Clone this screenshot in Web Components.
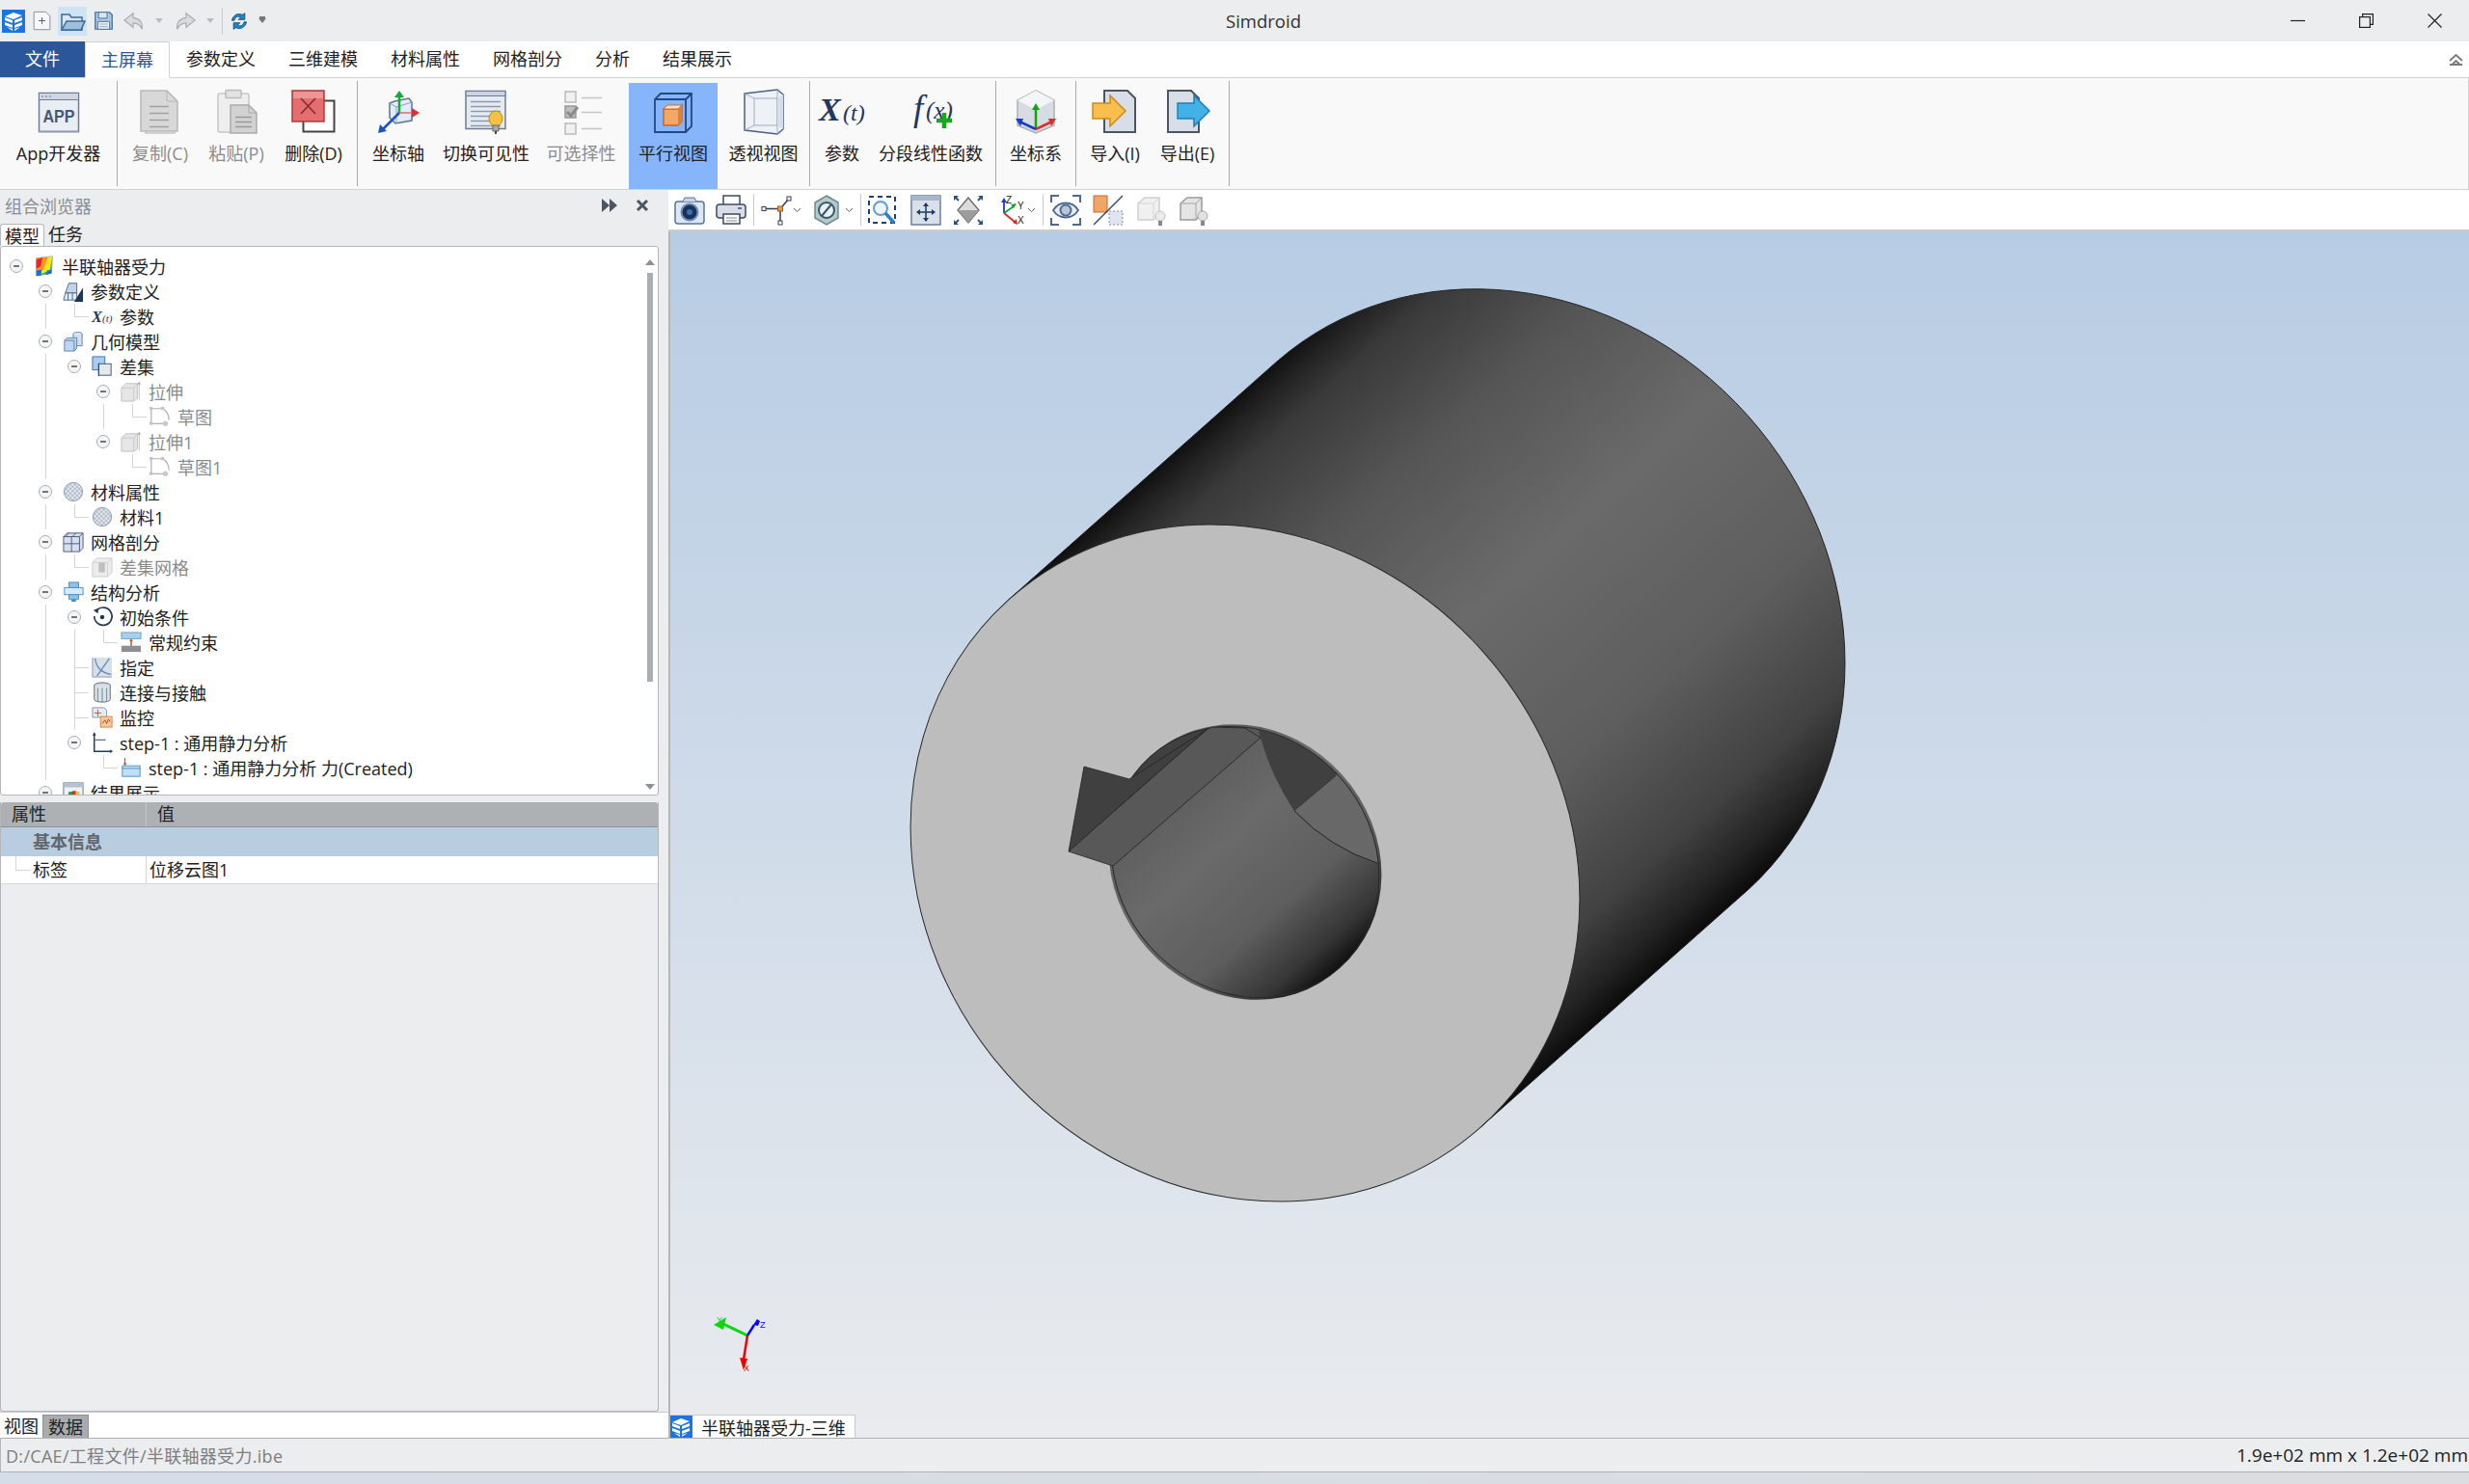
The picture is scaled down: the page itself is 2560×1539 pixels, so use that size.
<!DOCTYPE html>
<html lang="zh">
<head>
<meta charset="utf-8">
<title>Simdroid</title>
<style>
html, body { margin: 0; height: 100%; overflow: hidden; background: #ecedef; }
body { font: 18px "Open Sans", "Noto Sans CJK SC", sans-serif; color: #222; }
</style>
</head>
<body>
<sim-app></sim-app>

<script>
const doc = (x, y, w, h, fill, stroke, fold = 9) =>
  `<path d="M${x} ${y}h${w - fold}l${fold} ${fold}v${h - fold}h-${w}z" fill="${fill}" stroke="${stroke}" stroke-width="1.5"/><path d="M${x + w - fold} ${y}v${fold}h${fold}" fill="none" stroke="${stroke}"/>`
const lines = (x, y, w, n, gap, color) => {
  let out = ''
  for (let i = 0; i < n; i++) out += `<path d="M${x} ${y + i * gap + .5}h${w}" stroke="${color}" stroke-width="1.5"/>`
  return out
}
const bulb = (x, y, fill, stroke) =>
  `<circle cx="${x}" cy="${y}" r="5" fill="${fill}" stroke="${stroke}"/><path d="M${x - 2} ${y + 5}h4v5h-4z" fill="#888"/>`

// every icon is [viewBox size, markup]
const ICONS = {
  logo: [24, '<rect width="24" height="24" fill="#1b74e4"/><path d="M3 7l9-4 9 3-9 4zM3 8l8 3v3l-8-3zM13 11l8-3v3l-8 3zM3 13l8 3v3l-8-3zM13 16l8-3v3l-8 3zM5 18l6 2v2zM13 20l6-2-6 4z" fill="#fff"/>'],
  newdoc: [24, '<path d="M2.5 1.5h14l5 5v16h-19z" fill="#f6f7f9" stroke="#7b8794"/><path d="M12 8v8M8 12h8" stroke="#5d6772" stroke-width="1.2"/>'],
  open: [30, '<rect width="30" height="30" fill="#cfe3f7"/><path d="M4 24V8h8l2 3h11v13z" fill="#dfe6ef" stroke="#3d6b93" stroke-width="1.5"/><path d="M4 24l5-9h19l-4 9z" fill="#9dc0de" stroke="#3d6b93" stroke-width="1.5"/>'],
  save: [24, '<path d="M2 2h17l3 3v17H2z" fill="#a9c6e2" stroke="#47698c" stroke-width="1.4"/><path d="M6 2h10v7H6z" fill="#dde7f1" stroke="#47698c"/><path d="M5 13h14v9H5z" fill="#edf1f5" stroke="#47698c"/><path d="M7 16h10M7 19h10" stroke="#8aa0b5"/>'],
  undo: [24, '<path d="M11 3L1 11l10 8v-5c5 0 8 2 10 7 1-8-3-12-10-13z" fill="#d9dbde" stroke="#a9adb2" stroke-width="1.3"/>'],
  redo: [24, '<path d="M13 3l10 8-10 8v-5c-5 0-8 2-10 7-1-8 3-12 10-13z" fill="#d9dbde" stroke="#a9adb2" stroke-width="1.3"/>'],
  refresh: [24, '<path d="M3 11C4 5 10 1 16 4l3-2v8h-8l3-3c-4-2-7 0-8 4z" fill="#1b87c9" stroke="#17476e"/><path d="M21 13c-1 6-7 10-13 7l-3 2v-8h8l-3 3c4 2 7 0 8-4z" fill="#1b87c9" stroke="#17476e"/>'],

  app: [48, '<rect x="3.5" y="4.5" width="41" height="40" fill="#e9edf4" stroke="#6f7f9a" stroke-width="1.5"/><rect x="3.5" y="4.5" width="41" height="7" fill="#cfd6e2" stroke="#6f7f9a"/><path d="M6 8h2M10 8h2M14 8h2" stroke="#6f7f9a"/><text x="24" y="35" font-size="19" font-weight="700" text-anchor="middle" textLength="33" lengthAdjust="spacingAndGlyphs" font-family="Liberation Sans" fill="#47587a">APP</text><path d="M3 44.500h42" stroke="#8a96ac" stroke-width="1.5"/>'],
  copy: [48, `<path d="M9 10h30v36H9z" fill="#fff" stroke="#c4c4c4" stroke-width="1.5"/>${doc(4, 2, 38, 42, '#d8d8d8', '#b8b8b8', 11)}${lines(13, 18, 20, 4, 7, '#a2a2a2')}`],
  paste: [48, `<rect x="5" y="5" width="32" height="40" rx="2" fill="#eee" stroke="#c6c6c6" stroke-width="1.5"/><rect x="13" y="1.500" width="16" height="8" rx="1" fill="#e2e2e2" stroke="#bcbcbc" stroke-width="1.500"/>${doc(18, 17, 27, 29, '#d2d2d2', '#aaa', 8)}${lines(23, 29, 17, 3, 5, '#999')}`],
  del: [48, '<rect x="13.500" y="12.500" width="32" height="32" fill="#fff" stroke="#444" stroke-width="2"/><rect x="2" y="2" width="33" height="32" fill="#e56f70" stroke="#a93d3f" stroke-width="1.500"/><rect x="3" y="3" width="31" height="7" fill="#ee9596"/><path d="M11 10l15 16M26 10L11 26" stroke="#8f2c2e" stroke-width="1.800"/>'],
  axis: [48, '<path d="M20 13l15-3 3 4v19l-17 3-6-6V15z" fill="#dfeaf6" fill-opacity=".8" stroke="#5d7292" stroke-width="1.500"/><path d="M15 15l7 4 16-5M22 19v17" fill="none" stroke="#8ba0bc"/><path d="M25 25V8" stroke="#17a83c" stroke-width="2.500"/><path d="M20 9l5-7 5 7z" fill="#17a83c"/><path d="M25 25h15" stroke="#e06a6a" stroke-width="1.500"/><path d="M38 20l8 5-8 5z" fill="#e62b2b"/><path d="M25 25L8 42" stroke="#1656c4" stroke-width="2.500"/><path d="M3 46l2-9 7 7z" fill="#1656c4"/>'],
  vis: [48, `<rect x="3" y="2.500" width="41" height="39" fill="#e6ebf2" stroke="#6d7c94" stroke-width="1.500"/><path d="M3 2.500h41v5H3z" fill="#cad3df" stroke="#6d7c94"/>${lines(8, 13, 31, 6, 5, '#8e9aac')}<ellipse cx="34" cy="31" rx="7" ry="8" fill="#f4c142" stroke="#b88917"/><path d="M31 38h6v6h-6z" fill="#aaa" stroke="#666"/><path d="M34 44v3" stroke="#444" stroke-width="2"/>`],
  sel: [48, `<rect x="7" y="3" width="11" height="11" fill="#f0f0f0" stroke="#bbb" stroke-width="1.500"/><rect x="7" y="18" width="11" height="12" fill="#bdbdbd" stroke="#999" stroke-width="1.500"/><path d="M9 24l4 4 7-9" fill="none" stroke="#8b8b8b" stroke-width="3"/><rect x="7" y="36" width="11" height="11" fill="#f0f0f0" stroke="#bbb" stroke-width="1.500"/>${lines(24, 9, 21, 1, 0, '#c5c5c5')}${lines(24, 24, 21, 1, 0, '#c5c5c5')}${lines(24, 41, 21, 1, 0, '#c5c5c5')}`],
  parallel: [48, '<path d="M11 5h32v34l-6 6H5V11zM5 11h32v34M37 11l6-6" fill="none" stroke="#24477f" stroke-width="1.800"/><path d="M14 21h15l4-4v17l-4 4H14z" fill="#f3a867" stroke="#c66a24" stroke-width="1.500"/><path d="M14 21l4-4h15l-4 4z" fill="#fde4cb" stroke="#c66a24"/><path d="M29 21v17l4-4V17z" fill="#d9843d"/>'],
  persp: [48, '<path d="M4 5l34-4 6 5v36l-6 5-34-4z" fill="#eef1f6" stroke="#4e6180" stroke-width="1.500"/><path d="M4 5l10 5v28l-10 5M14 10h24v28H14M38 1v46" fill="none" stroke="#9eacc0"/><path d="M38 10l6-4v36l-6-4z" fill="#d8dee8"/>'],
  xt: [48, '<text x="0" y="33" font-family="Liberation Serif" font-style="italic" font-weight="700" font-size="34" fill="#22365f">X</text><text x="25" y="33" font-family="Liberation Serif" font-style="italic" font-size="24" fill="#22365f">(t)</text>'],
  fx: [48, '<text x="6" y="33" font-family="Liberation Serif" font-style="italic" font-size="37" fill="#22365f">f</text><text x="19" y="31" font-family="Liberation Serif" font-style="italic" font-size="25" fill="#22365f">(x)</text><path d="M38 25v16M30 33h16" stroke="#17a81e" stroke-width="4.500"/>'],
  coord: [48, '<path d="M24 2l19 10v26L24 46 5 38V12z" fill="#d7dce2" stroke="#aab0b8" stroke-width="1.500"/><path d="M5 12l19 10 19-10-19-10z" fill="#f4f5f6"/><path d="M24 42V18" stroke="#12a313" stroke-width="2.500"/><path d="M20 22l4-7 4 7z" fill="#12a313"/><path d="M24 42l17-8" stroke="#d73030" stroke-width="2.500"/><path d="M37 31l8 0-5 8z" fill="#d73030"/><path d="M24 42L7 34" stroke="#1a3fc0" stroke-width="2.500"/><path d="M11 31l-8 0 5 8z" fill="#1a3fc0"/>'],
  imp: [48, '<path d="M13 2h24l8 8v35H13z" fill="#d8dee8" stroke="#4d5563" stroke-width="2"/><path d="M1 15h18V7l16 16-16 16v-8H1z" fill="#f8bf4e" stroke="#c98a1c" stroke-width="1.500"/>'],
  exp: [48, '<path d="M4 2h24l8 8v35H4z" fill="#d8dee8" stroke="#4d5563" stroke-width="2"/><path d="M14 15h17V7l16 16-16 16v-8H14z" fill="#42b1e8" stroke="#1e7fb8" stroke-width="1.500"/>'],

  camera: [32, '<rect x="1" y="7" width="30" height="23" rx="3" fill="#dde6f1" stroke="#58749a" stroke-width="1.500"/><path d="M9 7l2-4h10l2 4" fill="#c6d4e5" stroke="#58749a"/><circle cx="16" cy="18" r="8.500" fill="#17335c" stroke="#6f8eb4" stroke-width="2"/><circle cx="16" cy="18" r="3" fill="#3f6ea8"/>'],
  printer: [32, '<rect x="8" y="1" width="17" height="10" fill="#fff" stroke="#3d4a5c" stroke-width="1.500"/><rect x="1" y="10" width="30" height="14" rx="3" fill="#d9dee6" stroke="#3d4a5c" stroke-width="1.500"/><rect x="8" y="20" width="17" height="10" fill="#fff" stroke="#3d4a5c" stroke-width="1.500"/><path d="M11 24h11M11 27h11" stroke="#7e8997"/><path d="M23 14h4" stroke="#58749a" stroke-width="2"/>'],
  tpoint: [32, '<path d="M3 14.500h17M20 14.500V28M20 14.500L29 4" stroke="#2f3f55" stroke-width="1.500" fill="none"/><rect x="1" y="12.500" width="4" height="4" fill="#fff" stroke="#2f3f55"/><rect x="17.500" y="12" width="5" height="5" fill="#f09a50" stroke="#a25a17"/><rect x="18" y="27" width="4" height="4" fill="#fff" stroke="#2f3f55"/><rect x="27" y="2" width="4" height="4" fill="#fff" stroke="#2f3f55"/>'],
  hexno: [32, '<path d="M16 1l12 7v16l-12 7-12-7V8z" fill="#b5cbc9" stroke="#6d8a8a" stroke-width="1.500"/><circle cx="16" cy="16" r="8" fill="#e9f0f0" stroke="#35566c" stroke-width="2"/><path d="M11 22L21 10" stroke="#35566c" stroke-width="2"/>'],
  zoombox: [32, '<rect x="2" y="2" width="27" height="27" fill="none" stroke="#1f3f72" stroke-width="2" stroke-dasharray="5 4"/><circle cx="14" cy="14" r="7" fill="#edf4fb" stroke="#5f9fd6" stroke-width="2"/><path d="M19 19l9 10" stroke="#2b7fc6" stroke-width="3.500"/>'],
  pan: [32, '<rect x="1" y="1" width="30" height="30" fill="#d9e0ea" stroke="#6d7f98" stroke-width="1.500"/><path d="M1 1h30v5H1z" fill="#a9b7c9"/><path d="M16 10v16M8 18h16" stroke="#1d3a66" stroke-width="1.500"/><path d="M16 8l-3 4h6zM16 28l-3-4h6zM6 18l4-3v6zM26 18l-4-3v6z" fill="#1d3a66"/>'],
  diamond: [32, '<path d="M16 3L27 16 16 29 5 16z" fill="#dcdcdc" stroke="#666" stroke-width="1.300"/><path d="M5 16h22L16 29z" fill="#9c9c9c"/><path d="M2 2l4 4M30 2l-4 4M2 30l4-4M30 30l-4-4" stroke="#27507f" stroke-width="1.800"/><path d="M1 1h5L1 6zM31 1h-5l5 5zM1 31h5l-5-5zM31 31h-5l5-5z" fill="#27507f"/>'],
  xyz: [32, '<path d="M9 19V7" stroke="#1a3fc0" stroke-width="1.800"/><path d="M6 8l3-5 3 5z" fill="#1a3fc0"/><path d="M9 19l10-7" stroke="#12a33a" stroke-width="1.800"/><path d="M16 10l6-1-3 5z" fill="#12a33a"/><path d="M9 19l11 9" stroke="#dd2525" stroke-width="1.800"/><path d="M18 29l5 2-1-6z" fill="#dd2525"/><text x="11" y="9" font-size="10" font-family="Liberation Sans" fill="#222">Z</text><text x="23" y="15" font-size="10" font-family="Liberation Sans" fill="#222">Y</text><text x="23" y="30" font-size="10" font-family="Liberation Sans" fill="#222">X</text>'],
  eye: [32, '<path d="M1 8V1h8M23 1h8v7M1 24v7h8M23 31h8v-7" fill="none" stroke="#4e6a92" stroke-width="2"/><path d="M3 16c6-10 20-10 26 0-6 10-20 10-26 0z" fill="#e8edf3" stroke="#4e6a92" stroke-width="1.800"/><circle cx="16" cy="16" r="5.500" fill="#b9c5d4" stroke="#4e6a92" stroke-width="2"/>'],
  ortho: [32, '<rect x="1" y="1" width="14" height="17" fill="#f2a568" stroke="#c66a24"/><path d="M1 31L31 1" stroke="#324a6e" stroke-width="1.500"/><rect x="17" y="17" width="14" height="14" fill="#dfe5ee" stroke="#7d8ca4" stroke-dasharray="2 2"/>'],
  cube1: [32, `<path d="M2 9l7-6h15v16l-6 7H2z" fill="#f0f0f0" stroke="#cfcfcf" stroke-width="1.500"/><path d="M2 9h16v17M18 9l6-6" fill="none" stroke="#d5d5d5"/>${bulb(25, 22, '#ececec', '#c2c2c2')}`],
  cube2: [32, `<path d="M2 9l7-6h15v16l-6 7H2z" fill="#e4e4e4" stroke="#9a9a9a" stroke-width="1.500"/><path d="M2 9h16v17M18 9l6-6" fill="none" stroke="#a6a6a6"/>${bulb(25, 22, '#e2e2e2', '#a8a8a8')}`],

  root: [24, '<path d="M3 3l18-2-1 19-17 3z" fill="#39b54a" stroke="#7e96ad"/><path d="M3 3l18-2-3 16-15 6z" fill="#f8e71c"/><path d="M3 3l13-1-5 14-8 3z" fill="#f7941d"/><path d="M3 5l7-3-2 10-5 3z" fill="#e8242c"/><path d="M3 17l6-1-1 7H3zM15 17l5-1v4l-6 2z" fill="#1b6fd0"/>'],
  paramdef: [24, '<path d="M3 14l4-11h9v11z" fill="#c3d3e8" stroke="#4a6285"/><path d="M3 14h13v8H1z" fill="#e2eaf3" stroke="#4a6285"/><path d="M6 14v8M11 14v8" stroke="#4a6285"/><path d="M23 8v16H13z" fill="#1c3460"/>'],
  xtsmall: [24, '<text x="0" y="18" font-family="Liberation Serif" font-style="italic" font-weight="700" font-size="18" fill="#22365f">X</text><text x="12" y="18" font-family="Liberation Serif" font-style="italic" font-size="12" fill="#22365f">(t)</text>'],
  geo: [24, '<ellipse cx="17" cy="4" rx="5" ry="2.500" fill="#dce8f3" stroke="#5b7fa6"/><path d="M12 4v13h10V4" fill="#cfe0f0" stroke="#5b7fa6"/><path d="M2 11l3-3h11v12l-3 3H2z" fill="#bcd6f0" stroke="#5b7fa6"/><path d="M2 11h11v12" fill="none" stroke="#5b7fa6"/>'],
  diff: [24, '<rect x="1" y="1" width="14" height="15" fill="#a8cdf0" stroke="#3c6ca0"/><rect x="8" y="9" width="14" height="13" fill="#e5e8ec" stroke="#3c4f6a"/><path d="M8 9v14" stroke="#1f3f72"/>'],
  extrude: [24, '<path d="M1 8l5-5h13v17l-4 3H1z" fill="#e6e6e6" stroke="#c0c0c0"/><path d="M1 8h14v15M15 8l4-5" fill="none" stroke="#c8c8c8"/><path d="M21 1v21" stroke="#bdbdbd"/><path d="M19 4l2-3 2 3z" fill="#aaa"/>'],
  sketch: [24, '<path d="M2 3h13c5 3 7 8 7 13M2 3v17h14" fill="none" stroke="#b0b0b0" stroke-width="1.300"/><rect x="0" y="1" width="3.500" height="3.500" fill="#c4c4c4"/><rect x="13" y="1" width="3.500" height="3.500" fill="#c4c4c4"/><rect x="0" y="18" width="3.500" height="3.500" fill="#c4c4c4"/><circle cx="18" cy="20" r="3" fill="#cacaca"/>'],
  mat: [24, '<defs><pattern id="c" width="5" height="5" patternUnits="userSpaceOnUse"><rect width="5" height="5" fill="#e8eef5"/><rect width="2.500" height="2.500" fill="#aeb7c3"/><rect x="2.500" y="2.500" width="2.500" height="2.500" fill="#aeb7c3"/></pattern></defs><circle cx="12" cy="12" r="10.500" fill="url(#c)" stroke="#8797ab"/>'],
  mesh: [24, '<path d="M1 6l4-4h18v17l-4 4H1z" fill="#d6dfea" stroke="#47597a"/><path d="M1 6h18v17M19 6l4-4M10 6v17M1 14h18M7 2l-4 4M15 2l-4 4" fill="none" stroke="#47597a"/>'],
  meshitem: [24, '<path d="M1 7l5-5h17v16l-5 5H1z" fill="#ececec" stroke="#cacaca"/><path d="M1 7h17v16M18 7l5-5" fill="none" stroke="#d2d2d2"/><rect x="8" y="7" width="7" height="11" fill="#bfbfbf"/>'],
  struct: [24, '<rect x="7" y="1" width="11" height="6" fill="#8cc4ea" stroke="#4b8dbe"/><rect x="2" y="7" width="21" height="8" fill="#d7eaf8" stroke="#4b8dbe"/><rect x="7" y="15" width="11" height="5" fill="#8cc4ea" stroke="#4b8dbe"/><rect x="10" y="20" width="5" height="3" fill="#4b8dbe"/>'],
  init: [24, '<path d="M6 4a10 10 0 1 1-3 7" fill="none" stroke="#24365a" stroke-width="1.800"/><path d="M2 4l6-2-1 6z" fill="#24365a"/><circle cx="12" cy="12" r="2.500" fill="#24365a"/>'],
  fix: [24, '<rect x="1" y="1" width="22" height="7" fill="#a9d0ee" stroke="#6d9cc2"/><path d="M12 10v7" stroke="#c8472f" stroke-width="1.500"/><path d="M10 11l2-3 2 3z" fill="#c8472f"/><rect x="1" y="16" width="22" height="7" fill="#8d8f92"/>'],
  assign: [24, '<rect x="1" y="1" width="22" height="22" fill="#d8dfe8"/><path d="M4 2c1 10 6 16 18 18M20 2L6 22" fill="none" stroke="#5a88b8" stroke-width="1.300"/><path d="M1 1v22h22" fill="none" stroke="#8a99ad"/>'],
  contact: [24, '<ellipse cx="12" cy="4" rx="9" ry="3" fill="#cfd8e0" stroke="#536677"/><path d="M3 4v16c0 4 18 4 18 0V4" fill="#dbe2e8" stroke="#536677"/><path d="M7 7v15M12 7v16M17 7v15" stroke="#6f8292"/>'],
  monitor: [24, '<path d="M1 1h13l3 3v8H1z" fill="#e8edf3" stroke="#7c8fa8"/><path d="M7 3v8M3 7h8" stroke="#c44c2e"/><rect x="10" y="11" width="13" height="12" fill="#f8c9a0" stroke="#d87f3a"/><path d="M12 19l3-4 2 4 2-5 2 3" fill="none" stroke="#b6401e"/>'],
  step: [24, '<path d="M3 2v20h20" fill="none" stroke="#1e3c6e" stroke-width="1.600"/><path d="M1 4l2-4 2 4zM21 20l3 2-3 2z" fill="#1e3c6e"/><path d="M4 9h12" stroke="#1e3c6e"/>'],
  force: [24, '<path d="M5 1v8" stroke="#c8472f" stroke-width="1.200"/><path d="M3 7l2 3 2-3z" fill="#c8472f"/><rect x="2" y="10" width="20" height="12" fill="#bfe0f7" stroke="#4b8dbe"/><path d="M2 13h20" stroke="#4b8dbe"/>'],
  result: [24, '<rect x="1" y="1" width="22" height="22" fill="#eef1f5" stroke="#5b6f8c"/><path d="M1 1h22v5H1z" fill="#b6c2d2"/><path d="M5 20l2-9h4v9z" fill="#1ca64a"/><path d="M10 20l1-10h4v10z" fill="#e8242c"/><path d="M14 20l1-9h4v9z" fill="#f7c21d"/>']
}

customElements.define('sim-icon', class extends HTMLElement {
  constructor () {
    super()
    this.attachShadow({ mode: 'open' })
  }

  connectedCallback () {
    const [box, markup] = ICONS[this.getAttribute('name')]
    const size = this.getAttribute('size') || box
    this.shadowRoot.innerHTML = `
      <style>:host { display: block; width: ${size}px; height: ${size}px; flex: none; } svg { display: block; overflow: visible; }</style>
      <svg width="${size}" height="${size}" viewBox="0 0 ${box} ${box}">${markup}</svg>`
  }
})

const titleTemplate = document.createElement('template')
titleTemplate.innerHTML = `
<style>
:host { display: grid; grid-template-columns: 1fr auto 1fr; align-items: center; height: 43px; background: #ecedef; font-size: 18px; }
.quick { display: flex; align-items: center; }
.title { color: #333; padding-left: 60px; font-size: 18.500px; }
.win { display: flex; justify-content: flex-end; align-items: center; gap: 56px; padding-right: 28px; }
.drop { width: 0; height: 0; border: 4px solid transparent; border-top: 5px solid #b9bcc0; border-bottom: 0; }
.sep { width: 1px; height: 28px; background: #c9cbce; }
</style>
<div class="quick">
  <sim-icon name="logo" size="24" style="margin-left:2px"></sim-icon>
  <sim-icon name="newdoc" size="21" style="margin-left:7px"></sim-icon>
  <sim-icon name="open" style="margin-left:6px"></sim-icon>
  <sim-icon name="save" size="21" style="margin-left:7px"></sim-icon>
  <sim-icon name="undo" size="22" style="margin-left:10px"></sim-icon>
  <span class="drop" style="margin-left:11px"></span>
  <sim-icon name="redo" size="22" style="margin-left:12px"></sim-icon>
  <span class="drop" style="margin-left:11px"></span>
  <span class="sep" style="margin-left:8px"></span>
  <sim-icon name="refresh" size="20" style="margin-left:7px"></sim-icon>
  <span class="drop" style="margin-left:10px;border-top-color:#777;box-shadow:0 -3px 0 -1px #777"></span>
</div>
<div class="title">Simdroid</div>
<div class="win">
  <svg width="15" height="15" viewBox="0 0 15 15"><path d="M0 7.500h15" stroke="#222" stroke-width="1.200"/></svg>
  <svg width="15" height="15" viewBox="0 0 15 15" fill="none" stroke="#222" stroke-width="1.200"><rect x=".6" y="3.600" width="10.800" height="10.800"/><path d="M3.600 3.600V.6h10.800v10.800h-3"/></svg>
  <svg width="15" height="15" viewBox="0 0 15 15"><path d="M.5.5l14 14M14.500.5l-14 14" stroke="#222" stroke-width="1.200"/></svg>
</div>`

customElements.define('sim-titlebar', class extends HTMLElement {
  constructor () {
    super()
    this.attachShadow({ mode: 'open' }).appendChild(titleTemplate.content.cloneNode(true))
  }
})

const tabsTemplate = document.createElement('template')
tabsTemplate.innerHTML = `
<style>
:host { display: flex; height: 38px; background: #fff; box-sizing: border-box; border-bottom: 1px solid #d2d3d5; font-size: 18px; line-height: 37px; position: relative; }
span { padding: 0 17px; }
.file { width: 88px; box-sizing: border-box; padding: 0; text-align: center; background: #2b579a; color: #fff; }
.home { width: 88px; box-sizing: border-box; padding: 0; text-align: center; color: #2b579a; border: 1px solid #d2d3d5; border-bottom: 1px solid #fff; height: 38px; }
svg { position: absolute; right: 6px; top: 12px; }
</style>
<span class="file">文件</span>
<span class="home">主屏幕</span>
<span>参数定义</span>
<span>三维建模</span>
<span>材料属性</span>
<span>网格剖分</span>
<span>分析</span>
<span>结果展示</span>
<svg width="15" height="13" viewBox="0 0 15 13" fill="none" stroke="#77797d" stroke-width="1.800"><path d="M1 8l6.500-6L14 8M1 12h13M4 11.500l3.500-3.500 3.500 3.500"/></svg>`

customElements.define('sim-tabs', class extends HTMLElement {
  constructor () {
    super()
    this.attachShadow({ mode: 'open' }).appendChild(tabsTemplate.content.cloneNode(true))
  }
})

const ribbonButtonTemplate = document.createElement('template')
ribbonButtonTemplate.innerHTML = `
<style>
:host { display: flex; flex-direction: column; align-items: center; box-sizing: border-box; padding-top: 6px; height: 110px; white-space: nowrap; font-size: 18px; line-height: 24px; color: #222; }
:host([off]) { color: #8c8c8c; }
:host([active]) { background: #87b5fb; }
.pic { height: 48px; margin-bottom: 7px; }
</style>
<div class="pic"><slot name="icon"></slot></div>
<slot></slot>`

customElements.define('rb-button', class extends HTMLElement {
  constructor () {
    super()
    this.attachShadow({ mode: 'open' }).appendChild(ribbonButtonTemplate.content.cloneNode(true))
  }

  connectedCallback () {
    this.style.width = this.getAttribute('w') + 'px'
  }
})

const ribbonTemplate = document.createElement('template')
ribbonTemplate.innerHTML = `
<style>
:host { display: flex; height: 116px; box-sizing: border-box; background: #f9f9f9; border-bottom: 1px solid #d2d3d5; border-right: 1px solid #d2d3d5; overflow: hidden; }
.group { display: flex; border-right: 1px solid #a9abae; height: 109px; margin-top: 3px; }
.group rb-button { margin-top: 2px; }
</style>
<div class="group" style="width:121px">
  <rb-button w="121"><sim-icon slot="icon" name="app"></sim-icon>App开发器</rb-button>
</div>
<div class="group" style="width:248px">
  <rb-button w="88" off><sim-icon slot="icon" name="copy"></sim-icon>复制(C)</rb-button>
  <rb-button w="70" off><sim-icon slot="icon" name="paste"></sim-icon>粘贴(P)</rb-button>
  <rb-button w="90"><sim-icon slot="icon" name="del"></sim-icon>删除(D)</rb-button>
</div>
<div class="group" style="width:468px">
  <rb-button w="84"><sim-icon slot="icon" name="axis"></sim-icon>坐标轴</rb-button>
  <rb-button w="98"><sim-icon slot="icon" name="vis"></sim-icon>切换可见性</rb-button>
  <rb-button w="99" off><sim-icon slot="icon" name="sel"></sim-icon>可选择性</rb-button>
  <rb-button w="92" active><sim-icon slot="icon" name="parallel"></sim-icon>平行视图</rb-button>
  <rb-button w="95"><sim-icon slot="icon" name="persp"></sim-icon>透视视图</rb-button>
</div>
<div class="group" style="width:192px">
  <rb-button w="66"><sim-icon slot="icon" name="xt"></sim-icon>参数</rb-button>
  <rb-button w="118"><sim-icon slot="icon" name="fx"></sim-icon>分段线性函数</rb-button>
</div>
<div class="group" style="width:82px">
  <rb-button w="82"><sim-icon slot="icon" name="coord"></sim-icon>坐标系</rb-button>
</div>
<div class="group" style="width:158px">
  <rb-button w="80"><sim-icon slot="icon" name="imp"></sim-icon>导入(I)</rb-button>
  <rb-button w="70"><sim-icon slot="icon" name="exp"></sim-icon>导出(E)</rb-button>
</div>`

customElements.define('sim-ribbon', class extends HTMLElement {
  constructor () {
    super()
    this.attachShadow({ mode: 'open' }).appendChild(ribbonTemplate.content.cloneNode(true))
  }
})

const rowTemplate = document.createElement('template')
rowTemplate.innerHTML = `
<style>
:host { display: flex; align-items: center; height: 26px; position: relative; white-space: nowrap; font-size: 18px; color: #222; }
:host([muted]) { color: #8b8b8b; }
.toggle { width: 14px; height: 14px; box-sizing: border-box; border: 1px solid #a9adb2; border-radius: 50%; background: #f4f5f6; display: flex; align-items: center; justify-content: center; flex: none; visibility: hidden; }
.toggle::before { content: ""; width: 6px; height: 2px; background: #70757c; }
:host([open]) .toggle { visibility: visible; }
.pic { width: 22px; display: flex; justify-content: center; margin: 0 7px 0 11px; flex: none; }
i { position: absolute; background: #d3d5d8; }
</style>
<div class="toggle"></div>
<div class="pic"><slot name="icon"></slot></div>
<slot></slot>`

customElements.define('tree-row', class extends HTMLElement {
  constructor () {
    super()
    this.attachShadow({ mode: 'open' }).appendChild(rowTemplate.content.cloneNode(true))
  }

  connectedCallback () {
    const level = Number(this.getAttribute('level'))
    this.style.paddingLeft = (9 + 30 * level) + 'px'

    const guides = (this.getAttribute('guides') || '').split(' ').filter(Boolean)
    guides.forEach((g) => this.#line(16 + 30 * g, 0, 1, 26))

    const x = 16 + 30 * level
    if (this.hasAttribute('elbow')) {
      this.#line(x, 0, 1, 14)
      this.#line(x, 13, 15, 1)
    }
    if (this.hasAttribute('tee')) {
      this.#line(x, 0, 1, 26)
      this.#line(x, 13, 15, 1)
    }
  }

  #line (left, top, width, height) {
    const line = document.createElement('i')
    line.style.cssText = `left:${left}px;top:${top}px;width:${width}px;height:${height}px`
    this.shadowRoot.appendChild(line)
  }
})

const treeTemplate = document.createElement('template')
treeTemplate.innerHTML = `
<style>
:host { display: block; height: 570px; box-sizing: border-box; width: 683px; background: #fff; border: 1px solid #b4b6b9; border-radius: 3px; overflow: hidden; position: relative; padding-top: 7px; }
.track { position: absolute; right: 5px; top: 27px; width: 6px; height: 424px; background: #a9aeb3; }
.up, .down { position: absolute; right: 3px; width: 0; height: 0; border: 5px solid transparent; }
.up { top: 13px; border-bottom: 6px solid #8d9195; border-top: 0; }
.down { bottom: 5px; border-top: 6px solid #8d9195; border-bottom: 0; }
</style>
<slot></slot>
<div class="track"></div>
<div class="up"></div>
<div class="down"></div>`

customElements.define('sim-tree', class extends HTMLElement {
  constructor () {
    super()
    this.attachShadow({ mode: 'open' }).appendChild(treeTemplate.content.cloneNode(true))
  }
})

const propsTemplate = document.createElement('template')
propsTemplate.innerHTML = `
<style>
:host { display: block; flex: 1; width: 683px; box-sizing: border-box; border: 1px solid #b4b6b9; border-top: 0; border-radius: 0 0 3px 3px; font-size: 18px; }
.row { display: grid; grid-template-columns: 150px 1fr; }
.head { height: 25px; line-height: 25px; background: #aeb1b4; color: #222; border-bottom: 1px solid #8f9295; border-radius: 3px 3px 0 0; }
.head span + span { border-left: 1px solid #c4c6c8; padding-left: 11px; }
.head span:first-child { padding-left: 11px; }
.group { height: 30px; line-height: 30px; background: #b9cde0; color: #62666b; font-weight: 700; padding-left: 33px; }
.item { height: 28px; line-height: 28px; background: #fff; border-bottom: 1px solid #d4d6d8; position: relative; }
.item .key { padding-left: 33px; }
.item .val { border-left: 1px solid #d4d6d8; padding-left: 3px; }
.item i { position: absolute; left: 15px; top: 0; width: 15px; height: 15px; border: solid #d3d5d8; border-width: 0 0 1px 1px; box-sizing: border-box; }
</style>
<div class="row head"><span>属性</span><span>值</span></div>
<div class="group">基本信息</div>
<div class="row item"><i></i><span class="key">标签</span><span class="val">位移云图1</span></div>`

customElements.define('sim-props', class extends HTMLElement {
  constructor () {
    super()
    this.attachShadow({ mode: 'open' }).appendChild(propsTemplate.content.cloneNode(true))
  }
})

const panelTemplate = document.createElement('template')
panelTemplate.innerHTML = `
<style>
:host { display: flex; flex-direction: column; width: 693px; flex: none; font-size: 18px; }
.head { display: flex; align-items: center; height: 35px; padding: 0 10px 3px 5px; width: 683px; box-sizing: border-box; color: #8a8f96; }
.head svg:first-of-type { margin-left: auto; margin-right: 19px; }
.tabs { display: flex; height: 23px; width: 683px; line-height: 23px; }
.tabs span { padding: 0 4px; height: 23px; box-sizing: border-box; }
.tabs .on { background: #fff; border: 1px solid #b4b6b9; border-bottom: 0; border-radius: 3px 3px 0 0; line-height: 25px; }
.gap { height: 7px; }
.foot { display: flex; height: 27px; background: #fff; border-top: 1px solid #c8cacc; box-sizing: border-box; align-items: flex-end; padding-left: 1px; line-height: 24px; }
.foot span { padding: 0 3px; height: 24px; }
.foot .on { background: #a9abad; margin-left: 1px; padding: 0 5px; border: 1px solid #8f9295; border-bottom: 0; box-sizing: border-box; }
</style>
<div class="head">
  组合浏览器
  <svg width="16" height="14" viewBox="0 0 16 14" fill="#4d5560"><path d="M0 0l8 7-8 7zM8 0l8 7-8 7z"/></svg>
  <svg width="14" height="14" viewBox="0 0 14 14"><path d="M2 2l10 10M12 2L2 12" stroke="#4d5560" stroke-width="3"/></svg>
</div>
<div class="tabs"><span class="on">模型</span><span>任务</span></div>
<slot name="tree"></slot>
<div class="gap"></div>
<slot name="props"></slot>
<div class="foot"><span>视图</span><span class="on">数据</span></div>`

customElements.define('sim-panel', class extends HTMLElement {
  constructor () {
    super()
    this.attachShadow({ mode: 'open' }).appendChild(panelTemplate.content.cloneNode(true))
  }
})

const toolbarTemplate = document.createElement('template')
toolbarTemplate.innerHTML = `
<style>
:host { display: flex; align-items: center; height: 43px; background: #fff; border-bottom: 2px solid #c9cbce; box-sizing: border-box; padding-left: 6px; flex: none; }
.sep { width: 1px; height: 33px; background: #c9cbce; flex: none; }
svg.chev { flex: none; }
sim-icon { flex: none; }
</style>
<sim-icon name="camera" style="margin-left:0"></sim-icon>
<sim-icon name="printer" style="margin-left:11px"></sim-icon>
<div class="sep" style="margin-left:7px"></div>
<sim-icon name="tpoint" style="margin-left:7px"></sim-icon>
<svg class="chev" width="9" height="6" viewBox="0 0 9 6" fill="none" stroke="#666" style="margin-left:1px"><path d="M1 1l3.500 3.500L8 1"/></svg>
<sim-icon name="hexno" style="margin-left:10px"></sim-icon>
<svg class="chev" width="9" height="6" viewBox="0 0 9 6" fill="none" stroke="#666" style="margin-left:3px"><path d="M1 1l3.500 3.500L8 1"/></svg>
<div class="sep" style="margin-left:7px"></div>
<sim-icon name="zoombox" style="margin-left:6px"></sim-icon>
<sim-icon name="pan" style="margin-left:13px"></sim-icon>
<sim-icon name="diamond" style="margin-left:12px"></sim-icon>
<sim-icon name="xyz" style="margin-left:12px"></sim-icon>
<svg class="chev" width="9" height="6" viewBox="0 0 9 6" fill="none" stroke="#666" style="margin-left:1px"><path d="M1 1l3.500 3.500L8 1"/></svg>
<div class="sep" style="margin-left:7px"></div>
<sim-icon name="eye" style="margin-left:7px"></sim-icon>
<sim-icon name="ortho" style="margin-left:12px"></sim-icon>
<sim-icon name="cube1" style="margin-left:13px"></sim-icon>
<sim-icon name="cube2" style="margin-left:12px"></sim-icon>`

customElements.define('sim-toolbar', class extends HTMLElement {
  constructor () {
    super()
    this.attachShadow({ mode: 'open' }).appendChild(toolbarTemplate.content.cloneNode(true))
  }
})

const viewportTemplate = document.createElement('template')
viewportTemplate.innerHTML = `
<style>
:host { display: block; flex: 1; position: relative; background: linear-gradient(#b7cce4, #e9ebee); border-left: 2px solid #b4b6b9; box-sizing: border-box; overflow: hidden; }
svg { position: absolute; left: -2px; top: 0; width: 1867px; height: 1206px; }
.doc { position: absolute; left: -2px; bottom: 0; display: flex; align-items: center; height: 24px; background: #fff; border: 1px solid #c8cacc; border-bottom: 0; box-sizing: border-box; width: 194px; font-size: 18px; }
.doc span { margin-left: 9px; }
</style>
<svg viewBox="693 240 1867 1206" font-family="Liberation Sans">
  <defs>
    <linearGradient id="side" gradientUnits="userSpaceOnUse" x1="1046" y1="622" x2="1536" y2="1168">
      <stop offset="0" stop-color="#0f0f0f"/>
      <stop offset=".03" stop-color="#222"/>
      <stop offset=".08" stop-color="#3a3a3a"/>
      <stop offset=".23" stop-color="#555"/>
      <stop offset=".45" stop-color="#6a6a6a"/>
      <stop offset=".7" stop-color="#5e5e5e"/>
      <stop offset=".88" stop-color="#424242"/>
      <stop offset=".96" stop-color="#222"/>
      <stop offset="1" stop-color="#0c0c0c"/>
    </linearGradient>
    <linearGradient id="bore" gradientUnits="userSpaceOnUse" x1="1193" y1="784" x2="1389" y2="1004">
      <stop offset="0" stop-color="#565656"/>
      <stop offset=".4" stop-color="#6a6a6a"/>
      <stop offset=".7" stop-color="#5e5e5e"/>
      <stop offset=".9" stop-color="#363636"/>
      <stop offset="1" stop-color="#101010"/>
    </linearGradient>
    <clipPath id="hole"><ellipse cx="1291" cy="894" rx="147" ry="132" transform="rotate(48.2 1291 894)"/></clipPath>
  </defs>

  <path d="M1046.200 621.600L1323.800 375.100A367 330 48.200 0 1 1813.400 921.900L1535.800 1168.400Z" fill="url(#side)" stroke="#222" stroke-width="1"/>
  <ellipse cx="1291" cy="895" rx="367" ry="330" transform="rotate(48.200 1291 895)" fill="#bdbdbd" stroke="#2a2a2a" stroke-width="1"/>

  <path d="M1193 784.500A147 132 48.200 1 1 1389 1003.500A147 132 48.200 1 1 1193 784.500Z" fill="url(#bore)"/>
  <g clip-path="url(#hole)">
    <path d="M1307 765Q1318 805 1342 841L1385 805L1400 760L1290 740Z" fill="#404040"/>
    <path d="M1342 841L1385 805" stroke="#222" stroke-width=".8"/>
    <path d="M1342 841Q1380 880 1428 895L1450 860L1385 805Z" fill="#686868"/>
    <path d="M1342 841Q1380 880 1428 895" fill="none" stroke="#222" stroke-width="1"/>
    <path d="M1160 830L1252 756L1300 740L1307 765L1154 898Z" fill="#585858"/>
    <path d="M1150 780L1260 740L1252 756L1150 860Z" fill="#404040"/>
  </g>
  <ellipse cx="1291" cy="894" rx="147" ry="132" transform="rotate(48.2 1291 894)" fill="none" stroke="#2a2a2a" stroke-width="1"/>
  <path d="M1108 883L1124 795L1171 808L1252 756L1108 883Z" fill="#404040" stroke="#222" stroke-width=".8"/>
  <path d="M1108 883L1252 756L1257 754L1291 755L1307 765L1154 898Z" fill="#585858" stroke="#222" stroke-width=".8"/>

  <path d="M775 1385L750 1373" stroke="#0fd60f" stroke-width="3"/>
  <path d="M740 1374L753 1366L750 1379Z" fill="#0fd60f"/>
  <text x="743" y="1372" font-size="9" fill="#0fd60f">Y</text>
  <path d="M775 1385L782 1374" stroke="#0a0af0" stroke-width="2.500"/>
  <path d="M786 1375l-5-1 4-6 3 2z" fill="#0a0af0"/>
  <text x="788" y="1377" font-size="9" fill="#0a0af0">Z</text>
  <path d="M775 1385L771 1410" stroke="#f00000" stroke-width="2.500"/>
  <path d="M767 1408l8 1-4 12z" fill="#f00000"/>
  <text x="771" y="1422" font-size="9" fill="#f00000">X</text>
</svg>
<div class="doc"><sim-icon name="logo" size="24"></sim-icon><span>半联轴器受力-三维</span></div>`

customElements.define('sim-viewport', class extends HTMLElement {
  constructor () {
    super()
    this.attachShadow({ mode: 'open' }).appendChild(viewportTemplate.content.cloneNode(true))
  }
})

const statusTemplate = document.createElement('template')
statusTemplate.innerHTML = `
<style>
:host { display: flex; justify-content: space-between; align-items: center; height: 36px; box-sizing: border-box; background: #ecedef; border-top: 1px solid #aeb0b3; border-bottom: 1px solid #aeb0b3; border-left: 1px solid #b4b6b9; font-size: 18px; padding: 0 1px 0 5px; }
.path { color: #7c7f83; letter-spacing: .3px; }
.size { color: #222; font-size: 19px; }
</style>
<span class="path">D:/CAE/工程文件/半联轴器受力.ibe</span>
<span class="size">1.9e+02 mm x 1.2e+02 mm</span>`

customElements.define('sim-status', class extends HTMLElement {
  constructor () {
    super()
    this.attachShadow({ mode: 'open' }).appendChild(statusTemplate.content.cloneNode(true))
  }
})

const appTemplate = document.createElement('template')
appTemplate.innerHTML = `
<style>
:host { display: grid; grid-template-rows: 43px 38px 116px 1294px 36px 12px; height: 1539px; width: 2560px; }
.main { display: flex; min-height: 0; background: #ecedef; }
.view { display: flex; flex-direction: column; flex: 1; min-width: 0; }
.wall { background: linear-gradient(90deg, #d5dde9, #dcdde0); }
sim-panel { height: 1294px; }
</style>
<sim-titlebar></sim-titlebar>
<sim-tabs></sim-tabs>
<sim-ribbon></sim-ribbon>
<div class="main">
  <sim-panel>
    <sim-tree slot="tree">
      <tree-row level="0" open><sim-icon slot="icon" name="root" size="22"></sim-icon>半联轴器受力</tree-row>
      <tree-row level="1" open><sim-icon slot="icon" name="paramdef" size="22"></sim-icon>参数定义</tree-row>
      <tree-row level="2" elbow guides="1"><sim-icon slot="icon" name="xtsmall" size="22"></sim-icon>参数</tree-row>
      <tree-row level="1" open><sim-icon slot="icon" name="geo" size="22"></sim-icon>几何模型</tree-row>
      <tree-row level="2" open guides="1"><sim-icon slot="icon" name="diff" size="22"></sim-icon>差集</tree-row>
      <tree-row level="3" open muted guides="1"><sim-icon slot="icon" name="extrude" size="22"></sim-icon>拉伸</tree-row>
      <tree-row level="4" elbow muted guides="1 3"><sim-icon slot="icon" name="sketch" size="22"></sim-icon>草图</tree-row>
      <tree-row level="3" open muted guides="1"><sim-icon slot="icon" name="extrude" size="22"></sim-icon>拉伸1</tree-row>
      <tree-row level="4" elbow muted guides="1"><sim-icon slot="icon" name="sketch" size="22"></sim-icon>草图1</tree-row>
      <tree-row level="1" open><sim-icon slot="icon" name="mat" size="22"></sim-icon>材料属性</tree-row>
      <tree-row level="2" elbow guides="1"><sim-icon slot="icon" name="mat" size="22"></sim-icon>材料1</tree-row>
      <tree-row level="1" open><sim-icon slot="icon" name="mesh" size="22"></sim-icon>网格剖分</tree-row>
      <tree-row level="2" elbow muted guides="1"><sim-icon slot="icon" name="meshitem" size="22"></sim-icon>差集网格</tree-row>
      <tree-row level="1" open><sim-icon slot="icon" name="struct" size="22"></sim-icon>结构分析</tree-row>
      <tree-row level="2" open guides="1"><sim-icon slot="icon" name="init" size="22"></sim-icon>初始条件</tree-row>
      <tree-row level="3" elbow guides="1 2"><sim-icon slot="icon" name="fix" size="22"></sim-icon>常规约束</tree-row>
      <tree-row level="2" tee guides="1"><sim-icon slot="icon" name="assign" size="22"></sim-icon>指定</tree-row>
      <tree-row level="2" tee guides="1"><sim-icon slot="icon" name="contact" size="22"></sim-icon>连接与接触</tree-row>
      <tree-row level="2" tee guides="1"><sim-icon slot="icon" name="monitor" size="22"></sim-icon>监控</tree-row>
      <tree-row level="2" open guides="1"><sim-icon slot="icon" name="step" size="22"></sim-icon>step-1 : 通用静力分析</tree-row>
      <tree-row level="3" elbow guides="1"><sim-icon slot="icon" name="force" size="22"></sim-icon>step-1 : 通用静力分析 力(Created)</tree-row>
      <tree-row level="1" open><sim-icon slot="icon" name="result" size="22"></sim-icon>结果展示</tree-row>
    </sim-tree>
    <sim-props slot="props"></sim-props>
  </sim-panel>
  <div class="view">
    <sim-toolbar></sim-toolbar>
    <sim-viewport></sim-viewport>
  </div>
</div>
<sim-status></sim-status>
<div class="wall"></div>`

customElements.define('sim-app', class extends HTMLElement {
  constructor () {
    super()
    this.attachShadow({ mode: 'open' }).appendChild(appTemplate.content.cloneNode(true))
  }
})
</script>
</body>
</html>
